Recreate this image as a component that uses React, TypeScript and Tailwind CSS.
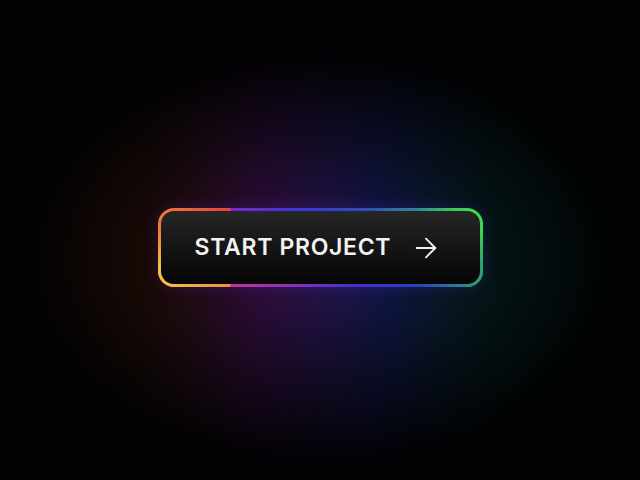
import { ArrowRight } from 'lucide-react';

export default function App() {
  return (
    <div
      className="relative flex h-[480px] w-[640px] items-center justify-center overflow-hidden bg-[#020203] pt-[15px]"
      style={{ fontFamily: 'Inter, "Noto Sans", sans-serif' }}
    >
      {/* coloured haze, faded out towards the edges */}
      <div className="pointer-events-none absolute inset-0 bg-[linear-gradient(90deg,#3e180c_22%,#401250_40%,#171f62_60%,#073432_78%)] [mask-image:radial-gradient(ellipse_300px_210px_at_50%_54%,rgba(0,0,0,0.95),rgba(0,0,0,0.4)_55%,transparent)]" />

      <button className="relative overflow-hidden rounded-[16px] p-[3px] shadow-[0_0_16px_rgba(110,60,200,0.2)]">
        {/* rainbow rim: top colours fade into bottom colours */}
        <span className="absolute inset-0 bg-[linear-gradient(90deg,#f07a3a_0%,#e4443c_22%,#7a2ad0_22.5%,#3a35d8_44%,#3050b8_65%,#2f8a90_80%,#3ccf55_92%,#3fdc4a_100%)]" />
        <span className="absolute inset-0 bg-[linear-gradient(90deg,#f5c444_0%,#e8904a_22%,#c0359a_22.5%,#8030c0_44%,#4030c8_62%,#2a40c0_80%,#2a8a8a_95%,#2aa070_100%)] [mask-image:linear-gradient(to_bottom,transparent_25%,black_75%)]" />
        <span className="relative flex h-[73px] w-[319px] items-center gap-[19px] rounded-[13px] bg-gradient-to-b from-[#262626] to-[#060606] pl-[34px]">
          <span className="text-[23px] font-semibold leading-none tracking-[0.03em] text-[#f2f2f2]">
            START PROJECT
          </span>
          <ArrowRight className="h-[32px] w-[32px] text-[#f2f2f2]" strokeWidth={1.4} />
        </span>
      </button>
    </div>
  );
}
